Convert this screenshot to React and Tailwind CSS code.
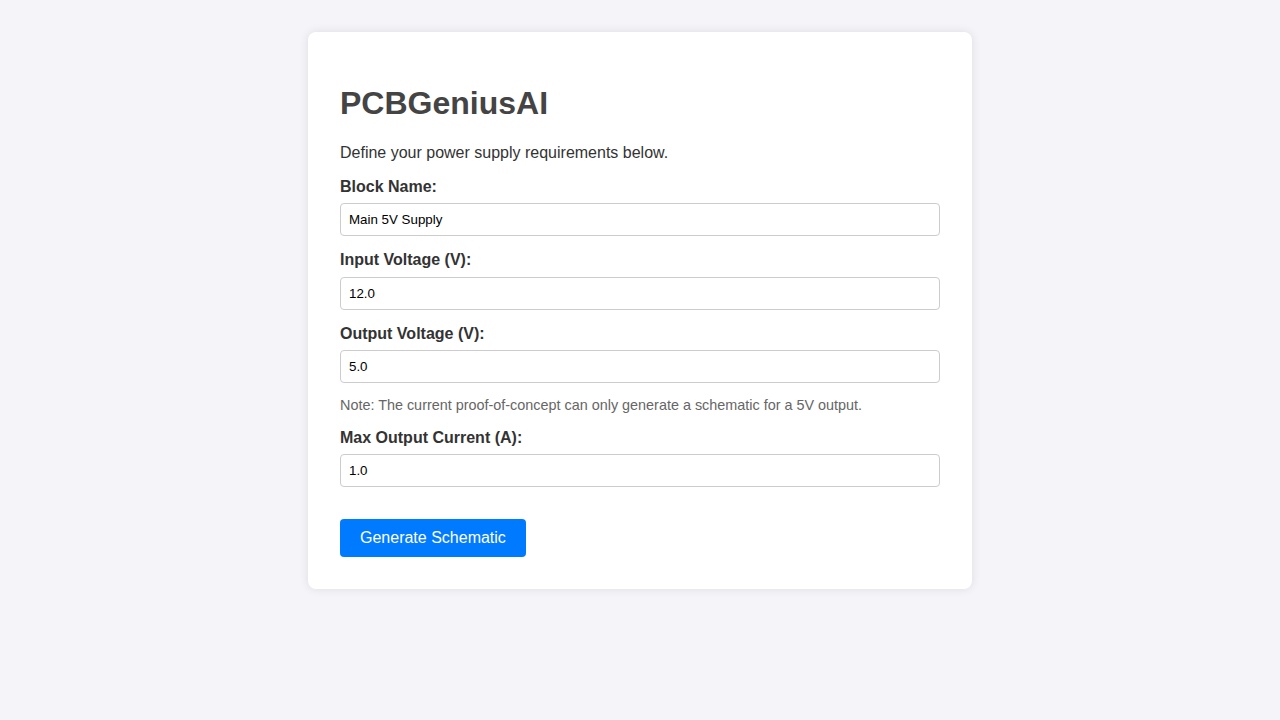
export default function App() {
  const fields = [
    { label: 'Block Name:', value: 'Main 5V Supply' },
    { label: 'Input Voltage (V):', value: '12.0' },
    { label: 'Output Voltage (V):', value: '5.0', note: true },
    { label: 'Max Output Current (A):', value: '1.0' },
  ];

  return (
    <div className="min-h-screen bg-[#f4f4f9] pt-8 text-[#333] font-['Liberation_Sans',Arial,sans-serif]">
      <div className="mx-auto w-[664px] rounded-lg bg-white p-8 shadow-[0_0_10px_rgba(0,0,0,0.1)]">
        <h1 className="my-[21.44px] text-[32px] font-bold leading-[36.8px] text-[#444]">PCBGeniusAI</h1>
        <p className="mb-4 text-base leading-[18.4px]">Define your power supply requirements below.</p>
        {fields.map((f, i) => (
          <div key={i} className={i === 0 ? '' : 'mt-[15px]'}>
            <label className="mb-[7px] block text-base font-bold leading-[18.4px]">{f.label}</label>
            <input
              type="text"
              defaultValue={f.value}
              className="block h-[33px] w-full rounded border border-[#ccc] px-2 text-[13.33px] text-black"
            />
            {f.note && (
              <p className="mt-[14px] text-[14.4px] leading-[16.56px] text-[#666]">
                Note: The current proof-of-concept can only generate a schematic for a 5V output.
              </p>
            )}
          </div>
        ))}
        <button className="mt-8 h-[38px] rounded bg-[#007bff] px-5 text-base leading-[18.4px] text-white">
          Generate Schematic
        </button>
      </div>
    </div>
  );
}
